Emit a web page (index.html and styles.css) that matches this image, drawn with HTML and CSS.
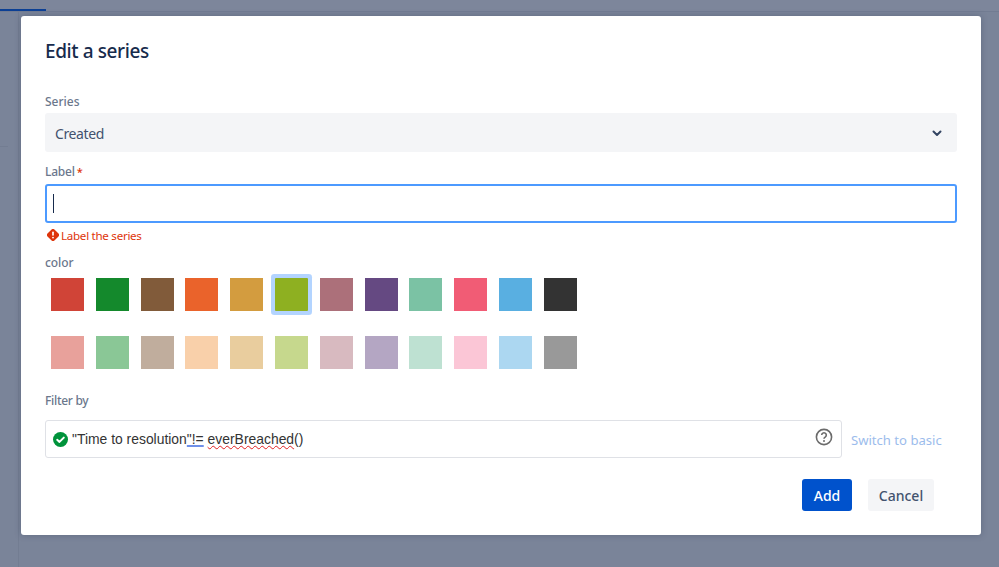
FILE: index.html
```html
<!DOCTYPE html>
<html lang="en">
<head>
    <meta charset="UTF-8">
    <title>Edit a series</title>
    <link rel="stylesheet" href="styles.css">
</head>
<body>
    <div class="topbar"><div class="tab-line"></div></div>
    <div class="dialog">
        <h1>Edit a series</h1>

        <div class="field-label series-label">Series</div>
        <div class="select">
            <span>Created</span>
            <svg width="10" height="7" viewBox="0 0 10 7"><path d="M1.500 1.500L5 5l3.500-3.500" fill="none" stroke="#344563" stroke-width="2" stroke-linecap="round" stroke-linejoin="round"/></svg>
        </div>

        <div class="field-label label-label">Label<span class="required">*</span></div>
        <div class="input-focus"><span class="caret"></span></div>
        <div class="error">
            <svg width="12" height="12" viewBox="0 0 13 13"><path d="M4.700.8a2.500 2.500 0 0 1 3.600 0l3.900 3.900a2.500 2.500 0 0 1 0 3.600l-3.900 3.900a2.500 2.500 0 0 1-3.600 0L.8 8.300a2.500 2.500 0 0 1 0-3.600z" fill="#de350b"/><rect x="5.600" y="2.800" width="1.800" height="4.600" rx=".8" fill="#fff"/><circle cx="6.500" cy="9.300" r="1" fill="#fff"/></svg>
            <span>Label the series</span>
        </div>

        <div class="field-label color-label">color</div>
        <div class="swatches">
            <div class="swatch" style="background:#d04437"></div>
            <div class="swatch" style="background:#14892c"></div>
            <div class="swatch" style="background:#815b3a"></div>
            <div class="swatch" style="background:#ea632b"></div>
            <div class="swatch" style="background:#d39c3f"></div>
            <div class="swatch selected" style="background:#8eb021"></div>
            <div class="swatch" style="background:#ac707a"></div>
            <div class="swatch" style="background:#654982"></div>
            <div class="swatch" style="background:#7bc2a4"></div>
            <div class="swatch" style="background:#f15c75"></div>
            <div class="swatch" style="background:#59afe1"></div>
            <div class="swatch" style="background:#333333"></div>
        </div>
        <div class="swatches second">
            <div class="swatch" style="background:#e8a19b"></div>
            <div class="swatch" style="background:#8ac796"></div>
            <div class="swatch" style="background:#c0ad9d"></div>
            <div class="swatch" style="background:#f9d0aa"></div>
            <div class="swatch" style="background:#e9cd9e"></div>
            <div class="swatch" style="background:#c6d88d"></div>
            <div class="swatch" style="background:#d8bac0"></div>
            <div class="swatch" style="background:#b4a6c3"></div>
            <div class="swatch" style="background:#bee1d2"></div>
            <div class="swatch" style="background:#fbc6d6"></div>
            <div class="swatch" style="background:#acd7f1"></div>
            <div class="swatch" style="background:#999999"></div>
        </div>

        <div class="field-label filter-label">Filter by</div>
        <div class="filter-row">
            <div class="jql">
                <svg class="ok" width="15" height="15" viewBox="0 0 15 15"><circle cx="7.500" cy="7.500" r="7.500" fill="#00933b"/><path d="M4.200 7.800l2.300 2.100 4.300-4.300" fill="none" stroke="#fff" stroke-width="2" stroke-linecap="round" stroke-linejoin="round"/></svg>
                <span class="jql-text">"Time to resolution<span class="warn">"!=</span> <span class="typo">everBreached</span>()</span>
                <svg class="help" width="18" height="18" viewBox="0 0 18 18"><circle cx="9" cy="9" r="7.600" fill="none" stroke="#6b6b6b" stroke-width="1.600"/><path d="M6.700 7.100a2.300 2.300 0 1 1 3.500 2c-.8.500-1.200.9-1.200 1.700" fill="none" stroke="#6b6b6b" stroke-width="1.600"/><circle cx="9" cy="13" r="1" fill="#6b6b6b"/></svg>
            </div>
            <span class="switch-link">Switch to basic</span>
        </div>

        <div class="actions">
            <button type="button" class="btn-add">Add</button>
            <button type="button" class="btn-cancel">Cancel</button>
        </div>
    </div>
</body>
</html>
```

FILE: styles.css
```css
html, body {
    height: 100%;
}

body {
    margin: 0;
    height: 567px;
    overflow: hidden;
    background-color: #7a8499;
    /* faint page lines showing through the overlay */
    background-image: linear-gradient(#737d92, #737d92), linear-gradient(#737d92, #737d92);
    background-repeat: no-repeat;
    background-size: 1px 100%, 8px 1px;
    background-position: 18px 0, 0 146px;
    font-family: "Noto Sans", Arial, sans-serif;
    color: #172b4d;
}

.topbar {
    height: 12px;
    background-color: #7d869b;
    border-bottom: 1px solid #727c92;
    box-sizing: border-box;
}

.tab-line {
    width: 46px;
    height: 2px;
    position: relative;
    top: 9px;
    background-color: #0b3f94;
}

.dialog {
    box-sizing: border-box;
    width: 960px;
    height: 519px;
    margin: 4px 0 0 21px;
    padding: 23px 24px 0;
    background: #fff;
    border-radius: 3px;
    box-shadow: 0 0 6px rgba(50,60,85,0.35);
}

h1 {
    margin: 0;
    font-size: 19px;
    line-height: 24px;
    font-weight: 500;
    letter-spacing: -0.4px;
    color: #172b4d;
}

.field-label {
    font-size: 12px;
    line-height: 16px;
    font-weight: 500;
    color: #6b778c;
}

.series-label {
    margin-top: 31px;
}

.select {
    display: flex;
    align-items: center;
    justify-content: space-between;
    box-sizing: border-box;
    height: 39px;
    margin-top: 3px;
    padding: 1px 15px 0 10px;
    background-color: #f4f5f7;
    border-radius: 3px;
    font-size: 14px;
    letter-spacing: -0.4px;
    color: #42526e;
}

.label-label {
    margin-top: 12px;
    letter-spacing: -0.2px;
}

.required {
    margin-left: 2px;
    font-size: 11px;
    color: #de350b;
}

.input-focus {
    box-sizing: border-box;
    display: flex;
    align-items: center;
    height: 39px;
    margin-top: 4px;
    padding-left: 6px;
    border: 2px solid #4c9aff;
    border-radius: 3px;
}

.caret {
    width: 1px;
    height: 19px;
    background-color: #172b4d;
}

.error {
    display: flex;
    align-items: center;
    gap: 2px;
    height: 16px;
    margin-top: 4px;
    padding-left: 2px;
    font-size: 11.6px;
    letter-spacing: -0.28px;
    color: #de350b;
}

.color-label {
    margin-top: 12px;
    letter-spacing: -0.1px;
}

.swatches {
    display: flex;
    gap: 11.8px;
    margin-top: 7px;
    padding-left: 6px;
}

.swatches.second {
    margin-top: 25px;
}

.swatch {
    width: 33px;
    height: 33px;
}

.swatch.selected {
    box-shadow: 0 0 0 4px #b3d4ff;
    border-radius: 1px;
}

.filter-label {
    margin-top: 24px;
    letter-spacing: -0.3px;
}

.filter-row {
    display: flex;
    align-items: center;
    margin-top: 11px;
}

.jql {
    box-sizing: border-box;
    display: flex;
    align-items: center;
    width: 797px;
    height: 38px;
    padding: 0 8px 0 7px;
    border: 1px solid #dfe1e6;
    border-radius: 3px;
    font-family: "Liberation Sans", Arial, sans-serif;
    font-size: 13.9px;
    color: #333;
}

.ok {
    flex-shrink: 0;
}

.jql-text {
    margin-left: 4px;
    flex: 1;
}

.warn {
    text-decoration: underline;
    text-decoration-color: #6f8fe8;
    text-decoration-thickness: 2px;
}

.typo {
    text-decoration: underline wavy #e02020;
    text-decoration-thickness: 1px;
}

.help {
    margin-bottom: 4px;
}

.switch-link {
    margin: 2px 0 0 9px;
    font-size: 13.1px;
    color: #9cbcec;
}

.actions {
    display: flex;
    justify-content: flex-end;
    gap: 16px;
    margin-top: 21px;
    padding-right: 23px;
}

button {
    height: 32px;
    border: none;
    border-radius: 3px;
    font-family: inherit;
    font-size: 14px;
    font-weight: 500;
    cursor: pointer;
}

.btn-add {
    width: 50px;
    background-color: #0052cc;
    color: #fff;
}

.btn-cancel {
    width: 66px;
    background-color: #f4f5f7;
    color: #42526e;
}
```
